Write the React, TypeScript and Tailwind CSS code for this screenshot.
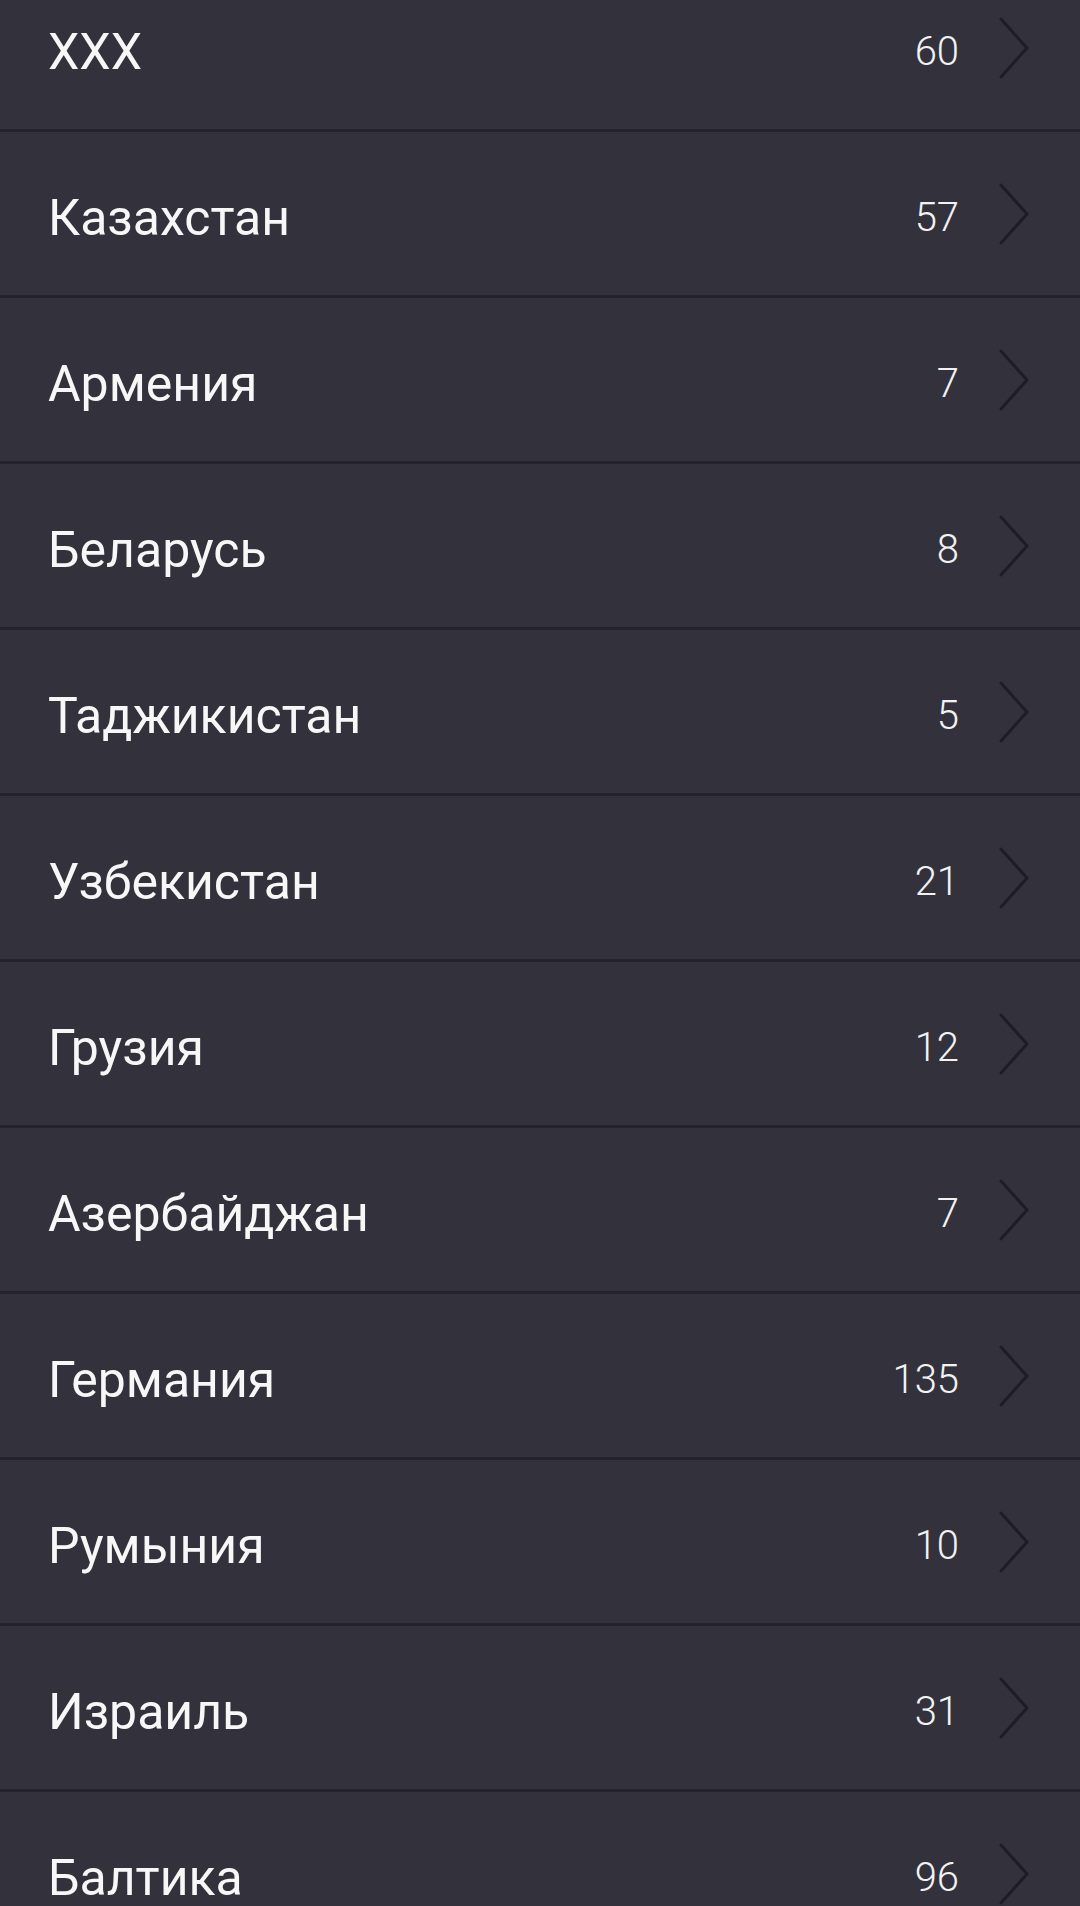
const rows: { name: string; count: number }[] = [
  { name: "XXX", count: 60 },
  { name: "Казахстан", count: 57 },
  { name: "Армения", count: 7 },
  { name: "Беларусь", count: 8 },
  { name: "Таджикистан", count: 5 },
  { name: "Узбекистан", count: 21 },
  { name: "Грузия", count: 12 },
  { name: "Азербайджан", count: 7 },
  { name: "Германия", count: 135 },
  { name: "Румыния", count: 10 },
  { name: "Израиль", count: 31 },
  { name: "Балтика", count: 96 },
];

const Chevron: React.FC = () => (
  <svg width="30" height="62" viewBox="0 0 30 62" fill="none" className="shrink-0">
    <path d="M2 2 L28 31 L2 60" stroke="#1e1d26" strokeWidth="3" strokeLinecap="round" strokeLinejoin="round" />
  </svg>
);

const App: React.FC = () => {
  return (
    <div className="w-[1080px] h-[1906px] overflow-hidden bg-[#33323c] font-['Roboto',sans-serif]">
      <div className="-mt-[34px]">
        {rows.map((row) => (
          <div
            key={row.name}
            className="flex items-center h-[166px] pl-[48px] pr-[51px] border-b-[3px] border-[#24232c]"
          >
            <span className="flex-1 text-[50px] text-[#f7f7f8] leading-none mt-[8px]">{row.name}</span>
            <span className="text-[40px] font-light text-[#f2f2f4] leading-none mr-[40px] mt-[8px]">{row.count}</span>
            <Chevron />
          </div>
        ))}
      </div>
    </div>
  );
};

export default App;
